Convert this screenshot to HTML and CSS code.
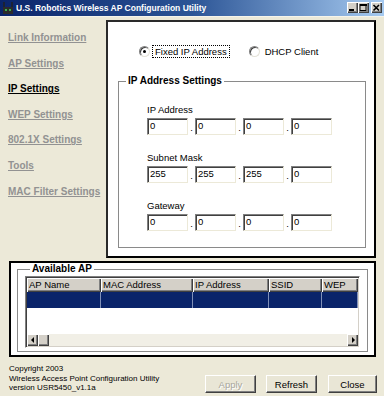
FILE: index.html
```html
<!DOCTYPE html>
<html lang="en">
<head>
<meta charset="UTF-8" />
<title>U.S. Robotics Wireless AP Configuration Utility</title>
<link rel="stylesheet" href="styles.css">
</head>
<body>

  <!-- Title bar -->
  <div class="titlebar">
    <svg class="app-icon" width="12" height="14" viewBox="0 0 12 14">
      <line x1="2" y1="1" x2="2" y2="7" stroke="#222" stroke-width="1.5"/>
      <line x1="10" y1="1" x2="10" y2="7" stroke="#222" stroke-width="1.5"/>
      <rect x="1" y="6" width="10" height="7" fill="#2b2b2b"/>
      <rect x="3" y="8" width="2" height="2" fill="#3fae4a"/>
      <rect x="7" y="8" width="2" height="2" fill="#3fae4a"/>
    </svg>
    <span class="title">U.S. Robotics Wireless AP Configuration Utility</span>
    <div class="caption-buttons">
      <span class="cap-btn">
        <svg width="9" height="8" viewBox="0 0 9 8"><rect x="1" y="5" width="5" height="2" fill="#000"/></svg>
      </span>
      <span class="cap-btn">
        <svg width="9" height="8" viewBox="0 0 9 8"><rect x="1" y="0.5" width="6" height="6" fill="none" stroke="#000"/><rect x="1" y="0" width="7" height="2" fill="#000"/></svg>
      </span>
      <span class="cap-btn close">
        <svg width="9" height="8" viewBox="0 0 9 8"><path d="M1.5 1 L7 6.5 M7 1 L1.5 6.5" stroke="#000" stroke-width="1.6"/></svg>
      </span>
    </div>
  </div>

  <div class="content">
    <!-- Left menu -->
    <ul class="nav">
      <li><a href="#">Link Information</a></li>
      <li><a href="#">AP Settings</a></li>
      <li><a href="#" class="active">IP Settings</a></li>
      <li><a href="#">WEP Settings</a></li>
      <li><a href="#">802.1X Settings</a></li>
      <li><a href="#">Tools</a></li>
      <li><a href="#">MAC Filter Settings</a></li>
    </ul>

    <!-- IP settings page -->
    <div class="panel">
      <div class="mode-row">
        <label class="radio checked"><span class="radio-dot"></span><span class="radio-text focus">Fixed IP Address</span></label>
        <label class="radio dhcp"><span class="radio-dot"></span><span class="radio-text">DHCP Client</span></label>
      </div>

      <fieldset class="group ip-group">
        <legend>IP Address Settings</legend>
        <div class="ip-fields">
          <div class="field-block">
            <div class="field-label">IP Address</div>
            <div class="octets">
              <span class="octet">0</span><span class="sep">.</span>
              <span class="octet">0</span><span class="sep">.</span>
              <span class="octet">0</span><span class="sep">.</span>
              <span class="octet">0</span>
            </div>
          </div>
          <div class="field-block">
            <div class="field-label">Subnet Mask</div>
            <div class="octets">
              <span class="octet">255</span><span class="sep">.</span>
              <span class="octet">255</span><span class="sep">.</span>
              <span class="octet">255</span><span class="sep">.</span>
              <span class="octet">0</span>
            </div>
          </div>
          <div class="field-block">
            <div class="field-label">Gateway</div>
            <div class="octets">
              <span class="octet">0</span><span class="sep">.</span>
              <span class="octet">0</span><span class="sep">.</span>
              <span class="octet">0</span><span class="sep">.</span>
              <span class="octet">0</span>
            </div>
          </div>
        </div>
      </fieldset>
    </div>
  </div>

  <!-- Available AP list -->
  <div class="ap-box">
    <fieldset class="group ap-group">
      <legend>Available AP</legend>
      <div class="listview">
        <div class="lv-row lv-head">
          <span class="col c1">AP Name</span>
          <span class="col c2">MAC Address</span>
          <span class="col c3">IP Address</span>
          <span class="col c4">SSID</span>
          <span class="col c5">WEP</span>
        </div>
        <div class="lv-row lv-selected">
          <span class="col c1"></span>
          <span class="col c2"></span>
          <span class="col c3"></span>
          <span class="col c4"></span>
          <span class="col c5"></span>
        </div>
        <div class="lv-body"></div>
        <div class="hscroll">
          <span class="sb-btn"><span class="arrow left"></span></span>
          <span class="sb-btn thumb"></span>
          <span class="sb-track"></span>
          <span class="sb-btn"><span class="arrow right"></span></span>
        </div>
      </div>
    </fieldset>
  </div>

  <!-- Footer -->
  <div class="footer">
    <div class="about">
      Copyright 2003<br>
      Wireless Access Point Configuration Utility<br>
      version USR5450_v1.1a
    </div>
    <div class="buttons">
      <button class="btn apply" disabled>Apply</button>
      <button class="btn refresh">Refresh</button>
      <button class="btn close-btn">Close</button>
    </div>
  </div>

</body>
</html>
```

FILE: styles.css
```css
* {
  box-sizing: border-box;
}

body {
  margin: 0;
  width: 384px;
  height: 396px;
  overflow: hidden;
  background: #ece9d8;
  font-family: "Liberation Sans", Arial, sans-serif;
  font-size: 9.5px;
  color: #000;
}

/* Title bar */
.titlebar {
  height: 17px;
  display: flex;
  align-items: center;
  padding: 0 2px 1px 2px;
  background: linear-gradient(to right, #0a246a 0%, #2c5596 50%, #a6caf0 100%);
  border-bottom: 1px solid #f6f4ea;
  color: #fff;
}

.app-icon {
  flex: none;
}

.title {
  margin-left: 2px;
  font-size: 8.5px;
  font-weight: bold;
  white-space: nowrap;
}

.caption-buttons {
  margin-left: auto;
  display: flex;
}

.cap-btn {
  width: 11px;
  height: 11px;
  display: flex;
  align-items: center;
  justify-content: center;
  background: #d4d0c8;
  box-shadow:
    inset 1px 1px 0 #fff,
    inset -1px -1px 0 #404040,
    inset -2px -2px 0 #808080;
}

.cap-btn.close {
  margin-left: 2px;
}

/* Main area */
.content {
  display: flex;
  margin-top: 3px;
  height: 238px;
}

.nav {
  width: 106px;
  margin: 0;
  padding: 5px 0 0 8px;
  list-style: none;
}

.nav li {
  height: 25.6px;
  line-height: 25.6px;
}

.nav a {
  font-size: 10px;
  font-weight: bold;
  color: #929292;
  text-decoration: underline;
  white-space: nowrap;
}

.nav a.active {
  color: #000;
}

.panel {
  width: 270px;
  background: #fff;
  border: 2px solid #000;
  border-color: #2a2a2a #000 #000 #2a2a2a;
  display: flex;
  flex-direction: column;
}

.mode-row {
  display: flex;
  align-items: center;
  height: 12px;
  margin-top: 23px;
  padding-left: 31px;
}

.radio {
  display: flex;
  align-items: center;
}

.radio-dot {
  position: relative;
  width: 11px;
  height: 11px;
  border-radius: 50%;
  background: #fff;
  border: 1px solid #808080;
  border-right-color: #e4e2d8;
  border-bottom-color: #e4e2d8;
  box-shadow: inset 1px 1px 0 #404040;
}

.radio.checked .radio-dot::after {
  content: "";
  position: absolute;
  left: 3px;
  top: 3px;
  width: 3px;
  height: 3px;
  border-radius: 50%;
  background: #000;
}

.radio-text {
  margin-left: 2px;
  padding: 0 2px;
  line-height: 11px;
  border: 1px solid transparent;
}

.radio-text.focus {
  border: 1px dotted #000;
}

.radio.dhcp {
  margin-left: 19px;
}

/* Group boxes */
.group {
  margin: 0;
  padding: 0;
  min-width: 0;
  border: 1px solid #8a8a8a;
}

.group legend {
  padding: 0 2px;
  font-size: 10px;
  font-weight: bold;
  line-height: 12px;
}

.ip-group {
  margin: 18px 8px 0 10px;
}

.ip-group legend {
  margin-left: 7px;
}

.ip-fields {
  padding: 17px 0 16px 28px;
}

.field-block + .field-block {
  margin-top: 17px;
}

.field-label {
  line-height: 12px;
}

.octets {
  display: flex;
  margin-top: 2px;
  height: 17px;
}

.octet {
  width: 41px;
  height: 17px;
  padding-left: 2px;
  line-height: 14px;
  background: #fff;
  border: 1px solid;
  border-color: #808080 #ece9d8 #ece9d8 #808080;
  box-shadow: inset 1px 1px 0 #404040;
}

.sep {
  width: 7px;
  text-align: center;
  line-height: 17px;
  padding-top: 1px;
}

/* Available AP */
.ap-box {
  margin: 3px 8px 0 9px;
  height: 96px;
  padding: 0 6px;
  background: #fff;
  border: 2px solid #000;
}

.ap-group legend {
  margin-left: 12px;
}

.listview {
  margin: 1px 7px 3px 7px;
  height: 72px;
  display: flex;
  flex-direction: column;
  border: 1px solid;
  border-color: #808080 #fff #fff #808080;
  box-shadow: inset 1px 1px 0 #404040, inset -1px -1px 0 #d4d0c8;
  padding: 1px;
}

.lv-row {
  display: flex;
  flex: none;
}

.col {
  flex: none;
  padding-left: 2px;
  white-space: nowrap;
  overflow: hidden;
}

.c1 { width: 74px; }
.c2 { width: 92px; }
.c3 { width: 76px; }
.c4 { width: 53px; }
.c5 { width: 36px; }

.lv-head .col {
  height: 14px;
  line-height: 14px;
  background: #d4d0c8;
  box-shadow:
    inset 1px 1px 0 #fff,
    inset -1px -1px 0 #404040,
    inset -2px -2px 0 #808080;
}

.lv-selected .col {
  height: 16px;
  background: #0a246a;
  border-right: 1px solid #8090b8;
}

.lv-body {
  flex: 1;
}

.hscroll {
  display: flex;
  height: 12px;
  background: #f1efe6;
}

.sb-btn {
  width: 11px;
  height: 12px;
  display: flex;
  align-items: center;
  justify-content: center;
  background: #d4d0c8;
  box-shadow:
    inset 1px 1px 0 #fff,
    inset -1px -1px 0 #404040,
    inset -2px -2px 0 #808080;
}

.sb-track {
  flex: 1;
}

.arrow {
  width: 0;
  height: 0;
  border-top: 3px solid transparent;
  border-bottom: 3px solid transparent;
}

.arrow.left {
  border-right: 3px solid #000;
  margin-right: 1px;
}

.arrow.right {
  border-left: 3px solid #000;
  margin-left: 1px;
}

/* Footer */
.footer {
  display: flex;
  justify-content: space-between;
  padding: 7px 7px 0 9px;
}

.about {
  font-size: 8px;
  line-height: 9.5px;
  white-space: nowrap;
}

.buttons {
  display: flex;
  gap: 10px;
  margin-top: 11px;
}

.btn {
  width: 51px;
  height: 18px;
  padding: 0;
  font-family: inherit;
  font-size: 9.5px;
  font-weight: normal;
  color: #000;
  background: #e9e6d6;
  border: 1px solid;
  border-color: #fff #404040 #404040 #fff;
  box-shadow: inset -1px -1px 0 #808080;
}

.btn.apply {
  color: #a7a69c;
  text-shadow: 1px 1px 0 #fff;
}

.btn.close-btn {
  width: 49px;
  margin-left: 1px;
}
```
